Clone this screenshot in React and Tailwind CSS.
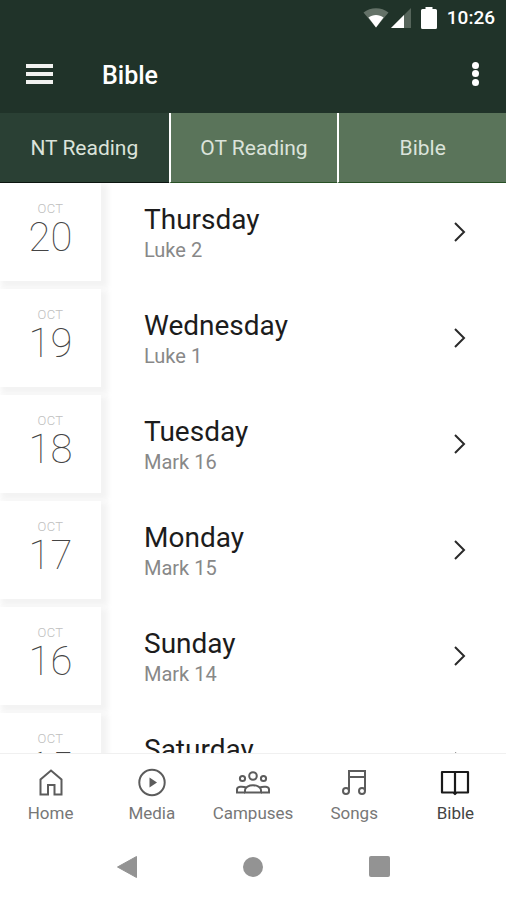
import React, { useState } from 'react';

const READINGS = [
    { month: 'OCT', date: '20', day: 'Thursday', passage: 'Luke 2' },
    { month: 'OCT', date: '19', day: 'Wednesday', passage: 'Luke 1' },
    { month: 'OCT', date: '18', day: 'Tuesday', passage: 'Mark 16' },
    { month: 'OCT', date: '17', day: 'Monday', passage: 'Mark 15' },
    { month: 'OCT', date: '16', day: 'Sunday', passage: 'Mark 14' },
    { month: 'OCT', date: '15', day: 'Saturday', passage: 'Mark 13' },
];

const TABS = ['NT Reading', 'OT Reading', 'Bible'];

const HomeIcon = () => (
    <svg width="30" height="30" viewBox="0 0 30 30" fill="none" stroke="currentColor" strokeWidth="2">
        <path d="M4.500 26.500V11.500L15 2.500L25.500 11.500V26.500H18.500V17H12V26.500Z" />
    </svg>
);

const MediaIcon = () => (
    <svg width="30" height="30" viewBox="0 0 30 30" fill="none" stroke="currentColor" strokeWidth="2">
        <circle cx="15" cy="14.500" r="12.700" />
        <path d="M12.500 9.500L20 14.500L12.500 19.500Z" fill="currentColor" stroke="none" />
    </svg>
);

const CampusesIcon = () => (
    <svg width="36" height="30" viewBox="0 0 36 30" fill="none" stroke="currentColor" strokeWidth="2">
        <circle cx="18" cy="8" r="3.800" />
        <circle cx="7.500" cy="10.500" r="2.600" />
        <circle cx="28.500" cy="10.500" r="2.600" />
        <path d="M10 24.500V22C10 19 14 17.300 18 17.300S26 19 26 22V24.500Z" />
        <path d="M10 24.500H2V21.500C2 18.500 7 18 11.500 19.500M26 24.500H34V21.500C34 18.500 29 18 24.500 19.500" />
    </svg>
);

const SongsIcon = () => (
    <svg width="30" height="30" viewBox="0 0 30 30" fill="none" stroke="currentColor" strokeWidth="2">
        <path d="M10 23V3H26V23M10 9H26" />
        <circle cx="7" cy="23" r="3" />
        <circle cx="23" cy="23" r="3" />
    </svg>
);

const BibleIcon = () => (
    <svg width="30" height="30" viewBox="0 0 30 30" fill="none" stroke="currentColor" strokeWidth="2.200">
        <path d="M2 4H28V24.500H16.500L15 26L13.500 24.500H2Z" strokeLinejoin="round" />
        <path d="M15 4V26" />
    </svg>
);

const NAV_ITEMS = [
    { label: 'Home', Icon: HomeIcon },
    { label: 'Media', Icon: MediaIcon },
    { label: 'Campuses', Icon: CampusesIcon },
    { label: 'Songs', Icon: SongsIcon },
    { label: 'Bible', Icon: BibleIcon },
];

const StatusBar = () => (
    <div className="flex h-9 items-center justify-end pr-[11px] text-white">
        <svg width="26" height="20" viewBox="0 0 26 20">
            <path d="M0.500 4.500C7.500 -1.200 18.500 -1.200 25.500 4.500L13 19.500Z" fill="#647268" />
            <path d="M5.500 9.500C9.500 6 16.500 6 20.500 9.500L13 19.500Z" fill="currentColor" />
        </svg>
        <svg className="ml-0.5" width="20" height="20" viewBox="0 0 20 20">
            <path d="M20 0V20H0Z" fill="#56655b" />
            <path d="M13 7V20H0Z" fill="currentColor" />
        </svg>
        <svg className="ml-2.5" width="16" height="22" viewBox="0 0 16 22" fill="currentColor">
            <path d="M4.500 0H11.500V2H14.500Q16 2 16 3.500V20.500Q16 22 14.500 22H1.500Q0 22 0 20.500V3.500Q0 2 1.500 2H4.500Z" />
        </svg>
        <span className="ml-2.5 text-[19px] leading-6 font-medium">10:26</span>
    </div>
);

const ReadingRow = ({ month, date, day, passage }) => (
    <li>
        <a href="#reading" className="flex h-[98px]">
            <div className="flex w-[101px] shrink-0 flex-col items-center bg-white pt-[18px] shadow-[4px_4px_6px_3px_#f3f3f3]">
                <span className="text-[13px] leading-4 font-light tracking-wide text-[#c0c0c0]">{month}</span>
                <span className="text-[40px] leading-[42px] font-thin text-[#444]">{date}</span>
            </div>
            <div className="flex flex-1 flex-col pt-[19px] pl-[43px]">
                <span className="text-[28px] leading-9 text-[#1c1c1c]">{day}</span>
                <span className="text-xl leading-6 text-[#888]">{passage}</span>
            </div>
            <svg className="mt-[38px] mr-[39px] shrink-0" width="16" height="22" viewBox="0 0 16 22" fill="none" stroke="#2a2a2a" strokeWidth="2">
                <path d="M4 2L13 11L4 20" />
            </svg>
        </a>
    </li>
);

const App = () => {
    const [activeTab, setActiveTab] = useState('NT Reading');
    const [activeNav, setActiveNav] = useState('Bible');

    return (
        <div className="flex h-screen flex-col bg-white font-['Roboto',sans-serif]">
            <header className="shrink-0 bg-[#203329] text-white">
                <StatusBar />
                <div className="flex h-[77px] items-center pr-4 pb-0.5 pl-[26px]">
                    <button type="button" aria-label="Open menu" className="flex h-5 w-[27px] flex-col justify-between">
                        <span className="h-1 w-full bg-[#f2f2f0]"></span>
                        <span className="h-1 w-full bg-[#f2f2f0]"></span>
                        <span className="h-1 w-full bg-[#f2f2f0]"></span>
                    </button>
                    <h1 className="ml-[49px] flex-1 pt-1 text-[25px] leading-8 font-medium">Bible</h1>
                    <button type="button" aria-label="More options" className="flex h-6 w-[30px] flex-col items-center justify-between">
                        <span className="size-[7px] rounded-full bg-white"></span>
                        <span className="size-[7px] rounded-full bg-white"></span>
                        <span className="size-[7px] rounded-full bg-white"></span>
                    </button>
                </div>
            </header>

            <div role="tablist" className="grid h-[70px] shrink-0 grid-cols-3">
                {TABS.map((tab) => (
                    <button key={tab} type="button" role="tab" aria-selected={activeTab === tab} onClick={() => setActiveTab(tab)}
                        className={`border-b border-l-2 border-l-white pt-0.5 text-[21px] text-[#dbe3da] first:border-l-0 ${activeTab === tab ? 'border-b-[#0b1510] bg-[#2a4034]' : 'border-b-[#285025] bg-[#5a745a]'}`}>
                        {tab}
                    </button>
                ))}
            </div>

            <main className="min-h-0 flex-1 overflow-y-auto [scrollbar-width:none]">
                <ul className="flex flex-col gap-2">
                    {READINGS.map((reading) => (
                        <ReadingRow key={reading.date} {...reading} />
                    ))}
                </ul>
            </main>

            <nav className="grid h-20 shrink-0 grid-cols-5 border-t border-[#f0f0f0] bg-white">
                {NAV_ITEMS.map(({ label, Icon }) => (
                    <button key={label} type="button" onClick={() => setActiveNav(label)}
                        className={`flex flex-col items-center pt-3.5 ${activeNav === label ? 'text-[#1a1a1a]' : 'text-[#5c5c5c]'}`}>
                        <Icon />
                        <span className={`mt-[3px] text-[17px] leading-6 ${activeNav === label ? 'text-[#444]' : 'text-[#777]'}`}>{label}</span>
                    </button>
                ))}
            </nav>

            {/* Android system buttons */}
            <div className="grid h-[67px] shrink-0 grid-cols-3 place-items-center bg-white px-[12.5%] text-[#939393]">
                <button type="button" aria-label="Back">
                    <svg width="22" height="24" viewBox="0 0 22 24" fill="currentColor">
                        <path d="M20.500 1.500V22.500L1.500 12Z" stroke="currentColor" strokeLinejoin="round" />
                    </svg>
                </button>
                <button type="button" aria-label="Home screen" className="size-5 rounded-full bg-[#939393]"></button>
                <button type="button" aria-label="Recent apps" className="size-[21px] rounded-xs bg-[#939393]"></button>
            </div>
        </div>
    );
};

export default App;
